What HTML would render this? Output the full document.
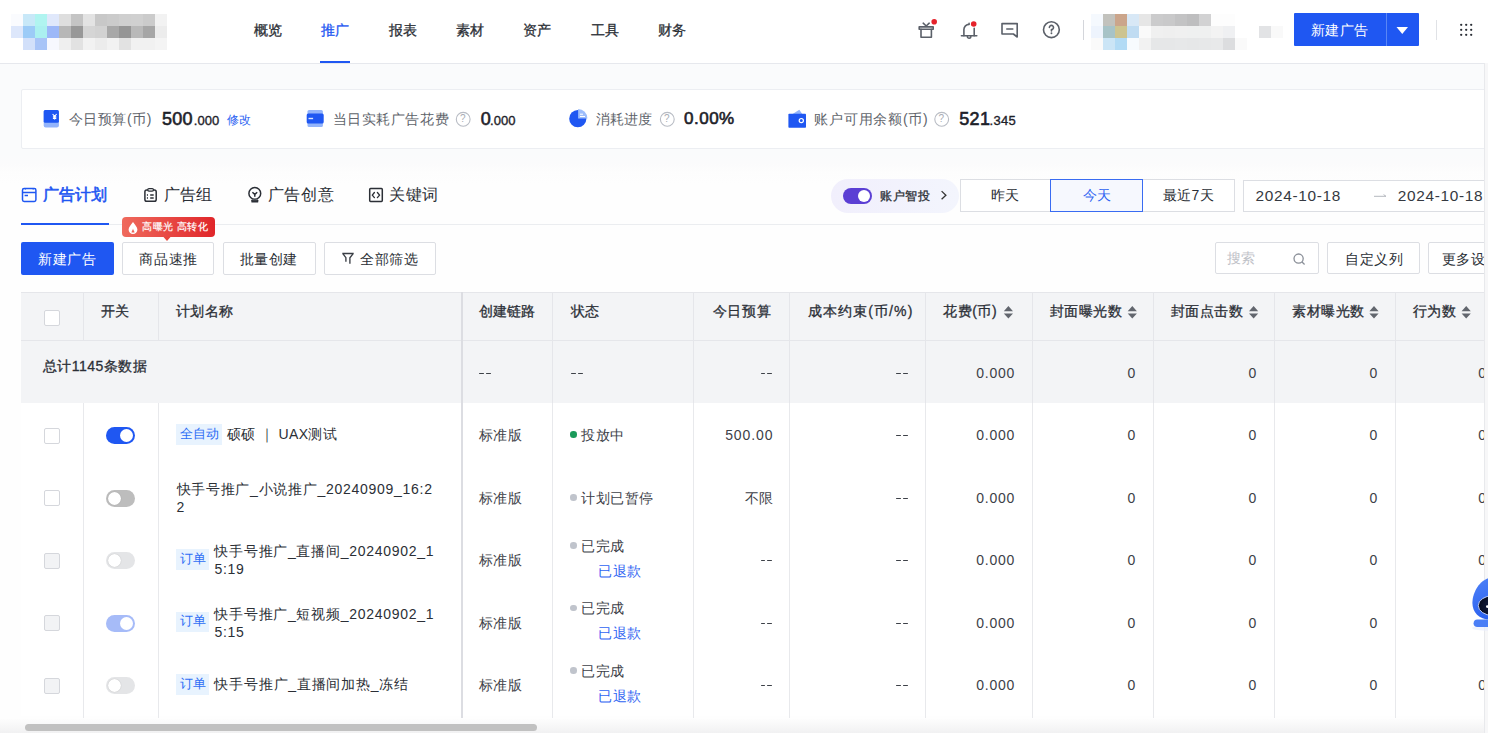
<!DOCTYPE html><html><head><meta charset="utf-8"><style>
html,body{margin:0;padding:0;width:1488px;height:733px;overflow:hidden;background:#fcfcfd;font-family:"Liberation Sans",sans-serif;}
.a{position:absolute;box-sizing:border-box;}
.t{position:absolute;white-space:nowrap;}
svg{position:absolute;overflow:visible;}
</style></head><body>

<div class="a" style="left:0px;top:0px;width:1488px;height:63px;background:#fff;"></div>
<div class="a" style="left:0px;top:63px;width:1488px;height:1px;background:#e6e8ed;"></div>
<div class="a" style="left:11px;top:14px;width:12px;height:12px;background:#fafbfe;"></div>
<div class="a" style="left:23px;top:14px;width:12px;height:12px;background:#c8e8f8;"></div>
<div class="a" style="left:35px;top:14px;width:12px;height:12px;background:#b0f4f0;"></div>
<div class="a" style="left:47px;top:14px;width:12px;height:12px;background:#e0e8fb;"></div>
<div class="a" style="left:59px;top:14px;width:12px;height:12px;background:#dedede;"></div>
<div class="a" style="left:71px;top:14px;width:12px;height:12px;background:#c4c4c4;"></div>
<div class="a" style="left:83px;top:14px;width:12px;height:12px;background:#e3e3e3;"></div>
<div class="a" style="left:95px;top:14px;width:12px;height:12px;background:#c8c8c8;"></div>
<div class="a" style="left:107px;top:14px;width:12px;height:12px;background:#cbcbcb;"></div>
<div class="a" style="left:119px;top:14px;width:12px;height:12px;background:#cfcfcf;"></div>
<div class="a" style="left:131px;top:14px;width:12px;height:12px;background:#d0d0d0;"></div>
<div class="a" style="left:143px;top:14px;width:12px;height:12px;background:#cbcbcb;"></div>
<div class="a" style="left:155px;top:14px;width:12px;height:12px;background:#f2f2f2;"></div>
<div class="a" style="left:11px;top:26px;width:12px;height:12px;background:#dde7fb;"></div>
<div class="a" style="left:23px;top:26px;width:12px;height:12px;background:#9ccbf7;"></div>
<div class="a" style="left:35px;top:26px;width:12px;height:12px;background:#abf0f0;"></div>
<div class="a" style="left:47px;top:26px;width:12px;height:12px;background:#9db8f8;"></div>
<div class="a" style="left:59px;top:26px;width:12px;height:12px;background:#b7b7b7;"></div>
<div class="a" style="left:71px;top:26px;width:12px;height:12px;background:#989898;"></div>
<div class="a" style="left:83px;top:26px;width:12px;height:12px;background:#d5d5d5;"></div>
<div class="a" style="left:95px;top:26px;width:12px;height:12px;background:#d2d2d2;"></div>
<div class="a" style="left:107px;top:26px;width:12px;height:12px;background:#a8a8a8;"></div>
<div class="a" style="left:119px;top:26px;width:12px;height:12px;background:#959595;"></div>
<div class="a" style="left:131px;top:26px;width:12px;height:12px;background:#b9b9b9;"></div>
<div class="a" style="left:143px;top:26px;width:12px;height:12px;background:#a6a6a6;"></div>
<div class="a" style="left:155px;top:26px;width:12px;height:12px;background:#ececec;"></div>
<div class="a" style="left:11px;top:38px;width:12px;height:12px;background:#ffffff;"></div>
<div class="a" style="left:23px;top:38px;width:12px;height:12px;background:#d2e0fa;"></div>
<div class="a" style="left:35px;top:38px;width:12px;height:12px;background:#a8c4f7;"></div>
<div class="a" style="left:47px;top:38px;width:12px;height:12px;background:#f7f8fe;"></div>
<div class="a" style="left:59px;top:38px;width:12px;height:12px;background:#efefef;"></div>
<div class="a" style="left:71px;top:38px;width:12px;height:12px;background:#e2e2e2;"></div>
<div class="a" style="left:83px;top:38px;width:12px;height:12px;background:#f2f2f2;"></div>
<div class="a" style="left:95px;top:38px;width:12px;height:12px;background:#ececec;"></div>
<div class="a" style="left:107px;top:38px;width:12px;height:12px;background:#f2f2f2;"></div>
<div class="a" style="left:119px;top:38px;width:12px;height:12px;background:#e2e2e2;"></div>
<div class="a" style="left:131px;top:38px;width:12px;height:12px;background:#f1f1f1;"></div>
<div class="a" style="left:143px;top:38px;width:12px;height:12px;background:#f1f1f1;"></div>
<div class="a" style="left:155px;top:38px;width:12px;height:12px;background:#f4f4f4;"></div>
<div class="t " style="left:253.5px;top:19.80px;font-size:14px;line-height:20px;color:#2b2f36;font-weight:400;letter-spacing:0px;-webkit-text-stroke:0.3px #2b2f36;">概览</div>
<div class="t " style="left:320.5px;top:19.80px;font-size:14px;line-height:20px;color:#1f57f2;font-weight:400;letter-spacing:0px;-webkit-text-stroke:0.3px #1f57f2;">推广</div>
<div class="t " style="left:388.5px;top:19.80px;font-size:14px;line-height:20px;color:#2b2f36;font-weight:400;letter-spacing:0px;-webkit-text-stroke:0.3px #2b2f36;">报表</div>
<div class="t " style="left:455.5px;top:19.80px;font-size:14px;line-height:20px;color:#2b2f36;font-weight:400;letter-spacing:0px;-webkit-text-stroke:0.3px #2b2f36;">素材</div>
<div class="t " style="left:522.5px;top:19.80px;font-size:14px;line-height:20px;color:#2b2f36;font-weight:400;letter-spacing:0px;-webkit-text-stroke:0.3px #2b2f36;">资产</div>
<div class="t " style="left:590.5px;top:19.80px;font-size:14px;line-height:20px;color:#2b2f36;font-weight:400;letter-spacing:0px;-webkit-text-stroke:0.3px #2b2f36;">工具</div>
<div class="t " style="left:657.5px;top:19.80px;font-size:14px;line-height:20px;color:#2b2f36;font-weight:400;letter-spacing:0px;-webkit-text-stroke:0.3px #2b2f36;">财务</div>
<div class="a" style="left:320px;top:61px;width:30px;height:2px;background:#1f57f2;"></div>
<svg style="left:0;top:0" width="1488" height="63">
<g fill="none" stroke="#5b6069" stroke-width="1.6" stroke-linejoin="round" stroke-linecap="round">
 <rect x="919.2" y="26.9" width="14" height="2.4"/>
 <path d="M921 29.4 V37.3 H931.4 V29.4"/>
 <path d="M923.2 23.2 L926.2 26 L929.2 23.2"/>
 <path d="M963.9 35.8 V29.6 A5.2 5.2 0 0 1 969.1 24.4 V23.4 M974.2 28.2 V35.8"/>
 <path d="M961.4 35.8 H976.8"/>
 <path d="M967.4 36.6 A1.7 1.7 0 0 0 970.8 36.6"/>
 <path d="M1002 23.6 H1017.2 V37 L1013.4 34 H1002 Z"/>
 <path d="M1006.8 29 H1012.8"/>
 <circle cx="1051.4" cy="29.7" r="7.9"/>
 <path d="M1049.4 27.4 A2.05 2.05 0 1 1 1051.45 29.45 V31"/>
</g>
<circle cx="1051.45" cy="33.3" r="0.95" fill="#5b6069"/>
<circle cx="934.2" cy="21.8" r="2.8" fill="#e5222b"/>
<circle cx="973.7" cy="24" r="2.8" fill="#e5222b"/>
</svg>
<div class="a" style="left:1083px;top:20px;width:1px;height:20px;background:#d4d6db;"></div>
<div class="a" style="left:1091px;top:14px;width:12px;height:12px;background:#f5f9fe;"></div>
<div class="a" style="left:1103px;top:14px;width:12px;height:12px;background:#c2c2bd;"></div>
<div class="a" style="left:1115px;top:14px;width:12px;height:12px;background:#cba58b;"></div>
<div class="a" style="left:1127px;top:14px;width:12px;height:12px;background:#d8e8f6;"></div>
<div class="a" style="left:1139px;top:14px;width:12px;height:12px;background:#e6e6e6;"></div>
<div class="a" style="left:1151px;top:14px;width:12px;height:12px;background:#cbcbcc;"></div>
<div class="a" style="left:1163px;top:14px;width:12px;height:12px;background:#c9c9ca;"></div>
<div class="a" style="left:1175px;top:14px;width:12px;height:12px;background:#c3c3c4;"></div>
<div class="a" style="left:1187px;top:14px;width:12px;height:12px;background:#bebebf;"></div>
<div class="a" style="left:1199px;top:14px;width:12px;height:12px;background:#d2d2d3;"></div>
<div class="a" style="left:1211px;top:14px;width:12px;height:12px;background:#fdfdfd;"></div>
<div class="a" style="left:1223px;top:14px;width:12px;height:12px;background:#fdfdfd;"></div>
<div class="a" style="left:1091px;top:26px;width:12px;height:12px;background:#eef4fd;"></div>
<div class="a" style="left:1103px;top:26px;width:12px;height:12px;background:#a7c3c7;"></div>
<div class="a" style="left:1115px;top:26px;width:12px;height:12px;background:#cdc490;"></div>
<div class="a" style="left:1127px;top:26px;width:12px;height:12px;background:#c0dcf2;"></div>
<div class="a" style="left:1139px;top:26px;width:12px;height:12px;background:#fafafa;"></div>
<div class="a" style="left:1151px;top:26px;width:12px;height:12px;background:#f0f0f0;"></div>
<div class="a" style="left:1163px;top:26px;width:12px;height:12px;background:#efefef;"></div>
<div class="a" style="left:1175px;top:26px;width:12px;height:12px;background:#f0f0f0;"></div>
<div class="a" style="left:1187px;top:26px;width:12px;height:12px;background:#eff0f0;"></div>
<div class="a" style="left:1199px;top:26px;width:12px;height:12px;background:#eff0f0;"></div>
<div class="a" style="left:1211px;top:26px;width:12px;height:12px;background:#f3f3f3;"></div>
<div class="a" style="left:1223px;top:26px;width:12px;height:12px;background:#eff0f2;"></div>
<div class="a" style="left:1091px;top:38px;width:12px;height:12px;background:#fafafa;"></div>
<div class="a" style="left:1103px;top:38px;width:12px;height:12px;background:#cbe5f6;"></div>
<div class="a" style="left:1115px;top:38px;width:12px;height:12px;background:#b2dbf5;"></div>
<div class="a" style="left:1127px;top:38px;width:12px;height:12px;background:#f7fbfe;"></div>
<div class="a" style="left:1139px;top:38px;width:12px;height:12px;background:#f2f2f2;"></div>
<div class="a" style="left:1151px;top:38px;width:12px;height:12px;background:#e6e7e8;"></div>
<div class="a" style="left:1163px;top:38px;width:12px;height:12px;background:#e6e7e8;"></div>
<div class="a" style="left:1175px;top:38px;width:12px;height:12px;background:#e7e8e9;"></div>
<div class="a" style="left:1187px;top:38px;width:12px;height:12px;background:#e6e7e8;"></div>
<div class="a" style="left:1199px;top:38px;width:12px;height:12px;background:#e7e8e9;"></div>
<div class="a" style="left:1211px;top:38px;width:12px;height:12px;background:#e8e9ea;"></div>
<div class="a" style="left:1223px;top:38px;width:12px;height:12px;background:#dcdddf;"></div>
<div class="a" style="left:1235px;top:38px;width:12px;height:12px;background:#fafafa;"></div>
<div class="a" style="left:1259px;top:26px;width:12px;height:12px;background:#e2e3e5;"></div>
<div class="a" style="left:1271px;top:26px;width:12px;height:12px;background:#f9f9f9;"></div>
<div class="a" style="left:1294px;top:13px;width:125px;height:33px;background:#1f57f2;border-radius:1px;"></div>
<div class="a" style="left:1386px;top:13px;width:1px;height:33px;background:#5a86f5;"></div>
<div class="t " style="left:1310.6px;top:20.00px;font-size:14px;line-height:20px;color:#fff;font-weight:400;letter-spacing:0.6px;">新建广告</div>
<svg style="left:0;top:0" width="1488" height="63"><path d="M1396.5 27 H1408 L1402.25 34 Z" fill="#fff"/></svg>
<div class="a" style="left:1436px;top:20px;width:1px;height:20px;background:#e0e2e6;"></div>
<svg style="left:0;top:0" width="1488" height="63"><circle cx="1461.2" cy="24.8" r="1.15" fill="#2b2f36"/><circle cx="1461.2" cy="29.8" r="1.15" fill="#2b2f36"/><circle cx="1461.2" cy="34.8" r="1.15" fill="#2b2f36"/><circle cx="1466.2" cy="24.8" r="1.15" fill="#2b2f36"/><circle cx="1466.2" cy="29.8" r="1.15" fill="#2b2f36"/><circle cx="1466.2" cy="34.8" r="1.15" fill="#2b2f36"/><circle cx="1471.2" cy="24.8" r="1.15" fill="#2b2f36"/><circle cx="1471.2" cy="29.8" r="1.15" fill="#2b2f36"/><circle cx="1471.2" cy="34.8" r="1.15" fill="#2b2f36"/></svg>
<div class="a" style="left:0px;top:64px;width:1484px;height:669px;background:linear-gradient(180deg,#fafbfc 0px,#fafbfc 90px,#fbfbfc 100px,#fdfdfd 108px,#fefefe 120px);"></div>
<div class="a" style="left:21px;top:89px;width:1470px;height:60px;background:#fff;border:1px solid #eceef2;border-radius:2px;"></div>
<svg style="left:0;top:0" width="1488" height="160">
 <rect x="43.7" y="110" width="15.2" height="17.5" rx="2" fill="#93b4fb"/>
 <rect x="43.7" y="110" width="15.2" height="12.8" rx="1.5" fill="#1f57f2"/>
 <path d="M52.6 114 L54.6 116.3 L56.6 114 M54.6 116.3 V119.6 M52.9 116.9 H56.3 M52.9 118.4 H56.3" stroke="#fff" stroke-width="1.1" fill="none"/>
 <rect x="307.5" y="110" width="15.4" height="17" rx="1.5" fill="#93b4fb"/>
 <rect x="306.7" y="113.5" width="17" height="10" rx="1.5" fill="#1f57f2"/>
 <rect x="308.5" y="117.8" width="4.6" height="1.4" fill="#fff" opacity="0.85"/>
 <circle cx="577.8" cy="118.7" r="8.6" fill="#1f57f2"/>
 <path d="M578.1 118.4 V109.1 A9.3 9.3 0 0 1 587.4 118.4 Z" fill="#9dbdfb"/>
 <path d="M580 114.2 H583 M580 116.5 H585" stroke="#fff" stroke-width="1"/>
 <path d="M792.6 114 L799.3 109.7 L802.3 114 Z" fill="#93b4fb"/>
 <rect x="788.4" y="113.8" width="17.6" height="14" rx="0.8" fill="#1f57f2"/>
 <circle cx="801.3" cy="120.6" r="2.1" fill="none" stroke="#fff" stroke-width="1.2"/>
 <g fill="none" stroke="#b8bcc4" stroke-width="1.1">
  <circle cx="463.2" cy="119.3" r="6.9"/><circle cx="667.3" cy="119.3" r="6.9"/><circle cx="941.7" cy="119.3" r="6.9"/>
 </g>
</svg>
<div class="t " style="left:460.0px;top:109.10px;font-size:10px;line-height:20px;color:#a8acb4;font-weight:400;letter-spacing:0px;">?</div>
<div class="t " style="left:664.0999999999999px;top:109.10px;font-size:10px;line-height:20px;color:#a8acb4;font-weight:400;letter-spacing:0px;">?</div>
<div class="t " style="left:938.5px;top:109.10px;font-size:10px;line-height:20px;color:#a8acb4;font-weight:400;letter-spacing:0px;">?</div>
<div class="t " style="left:68.5px;top:109.20px;font-size:14px;line-height:20px;color:#60646b;font-weight:400;letter-spacing:0.6px;">今日预算(币)</div>
<div class="t " style="left:162px;top:108.60px;font-size:18px;line-height:20px;color:#1d2129;font-weight:400;letter-spacing:0.3px;-webkit-text-stroke:0.6px #1d2129;">500</div>
<div class="t " style="left:193.8px;top:110.90px;font-size:13px;line-height:20px;color:#1d2129;font-weight:400;letter-spacing:0.05px;-webkit-text-stroke:0.35px #1d2129;">.000</div>
<div class="t " style="left:227.2px;top:109.80px;font-size:12.4px;line-height:20px;color:#2b62f2;font-weight:400;letter-spacing:0px;">修改</div>
<div class="t " style="left:332.5px;top:109.20px;font-size:14px;line-height:20px;color:#60646b;font-weight:400;letter-spacing:0.6px;">当日实耗广告花费</div>
<div class="t " style="left:480.8px;top:108.60px;font-size:18px;line-height:20px;color:#1d2129;font-weight:400;letter-spacing:0px;-webkit-text-stroke:0.6px #1d2129;">0</div>
<div class="t " style="left:490px;top:110.90px;font-size:13px;line-height:20px;color:#1d2129;font-weight:400;letter-spacing:0.05px;-webkit-text-stroke:0.35px #1d2129;">.000</div>
<div class="t " style="left:595.5px;top:109.20px;font-size:14px;line-height:20px;color:#60646b;font-weight:400;letter-spacing:0.3px;">消耗进度</div>
<div class="t " style="left:684px;top:109.30px;font-size:17px;line-height:20px;color:#1d2129;font-weight:400;letter-spacing:0.5px;-webkit-text-stroke:0.6px #1d2129;">0.00%</div>
<div class="t " style="left:814.4px;top:109.20px;font-size:14px;line-height:20px;color:#60646b;font-weight:400;letter-spacing:0.75px;">账户可用余额(币)</div>
<div class="t " style="left:959.3px;top:108.60px;font-size:18px;line-height:20px;color:#1d2129;font-weight:400;letter-spacing:0.3px;-webkit-text-stroke:0.6px #1d2129;">521</div>
<div class="t " style="left:989.5px;top:110.90px;font-size:13px;line-height:20px;color:#1d2129;font-weight:400;letter-spacing:0.3px;-webkit-text-stroke:0.35px #1d2129;">.345</div>
<div class="a" style="left:21px;top:224px;width:1463px;height:1px;background:#ebedf0;"></div>
<div class="a" style="left:21px;top:223px;width:88px;height:2px;background:#1f57f2;"></div>
<svg style="left:0;top:160" width="1488" height="100"><g transform="translate(0,-160)" fill="none" stroke-width="1.5">
 <rect x="22.5" y="188.6" width="13.4" height="12.8" rx="1.6" stroke="#1f57f2"/>
 <path d="M22.5 192.6 H35.9 M24.6 195.6 H28" stroke="#1f57f2"/>
 <path d="M25.4 187.9 V189.6 M33.2 187.9 V189.6" stroke="#1f57f2" stroke-width="1.3"/>
 <rect x="144.9" y="189.9" width="11.3" height="11.4" rx="1.8" stroke="#2b2f36"/>
 <rect x="147.7" y="188.5" width="5.8" height="2.6" rx="1.3" stroke="#2b2f36" stroke-width="1.25" fill="#fff"/>
 <path d="M146.9 195 H148 M150.2 195 H153.7 M146.9 198 H148 M150.2 198 H153.7" stroke="#2b2f36" stroke-width="1.3"/>
 <circle cx="254.8" cy="193.4" r="5.9" stroke="#2b2f36"/>
 <rect x="251.3" y="199.4" width="7" height="3.2" rx="0.9" fill="#2b2f36" stroke="none"/>
 <path d="M252.5 199.9 H257.1" stroke="#fff" stroke-width="0.7" opacity="0.35"/>
 <path d="M252.4 192.3 L254.8 194.4 L257.2 192.3 M254.8 194.4 V196.7" stroke="#2b2f36" stroke-width="1.5"/>
 <rect x="369.7" y="188.6" width="12.6" height="12.9" rx="0.9" stroke="#2b2f36"/>
 <path d="M374.4 192.5 L372.3 195.1 L374.4 197.6 M377.4 192.5 L379.6 195.1 L377.4 197.6" stroke="#2b2f36" stroke-width="1.35" stroke-linecap="round" stroke-linejoin="round"/>
</g></svg>
<div class="t " style="left:42.5px;top:184.70px;font-size:16px;line-height:20px;color:#1f57f2;font-weight:400;letter-spacing:0.3px;-webkit-text-stroke:0.6px #1f57f2;">广告计划</div>
<div class="t " style="left:163.5px;top:185.30px;font-size:16px;line-height:20px;color:#2b2f36;font-weight:400;letter-spacing:0.2px;">广告组</div>
<div class="t " style="left:267.5px;top:185.30px;font-size:16px;line-height:20px;color:#2b2f36;font-weight:400;letter-spacing:0.75px;">广告创意</div>
<div class="t " style="left:389.2px;top:185.30px;font-size:16px;line-height:20px;color:#2b2f36;font-weight:400;letter-spacing:0.5px;">关键词</div>
<div class="a" style="left:122.4px;top:217px;width:92.4px;height:20.3px;border-radius:4px;background:linear-gradient(90deg,#ef6a5d,#e0262a);"></div>
<svg style="left:0;top:0" width="300" height="260"><path d="M163.5 237 L167 241 L170.5 237 Z" fill="#e8473f"/>
<path d="M133 222 C131 225 128.6 227 128.6 229.6 A4.4 4.4 0 0 0 137.4 229.6 C137.4 227 135 225 133 222 Z M131.5 232.5 C131.5 231 133 230 133 228.5 C133 230 134.5 231 134.5 232.5 Z" fill="#fff" fill-rule="evenodd"/></svg>
<div class="t " style="left:142.3px;top:216.90px;font-size:10px;line-height:20px;color:#fff;font-weight:400;letter-spacing:0.45px;-webkit-text-stroke:0.2px #fff;">高曝光 高转化</div>
<div class="a" style="left:830.5px;top:179.4px;width:128.5px;height:33.3px;border-radius:17px;background:linear-gradient(90deg,#f1effc,#f3f5fd);"></div>
<div class="a" style="left:843px;top:188px;width:29px;height:15.5px;border-radius:8px;background:#5b3fd4;"></div>
<div class="a" style="left:857.5px;top:189.6px;width:12.4px;height:12.4px;border-radius:50%;background:#fff;"></div>
<svg style="left:0;top:0" width="1000" height="260"><path d="M941.6 191.1 L945.9 195.2 L941.6 199.3" fill="none" stroke="#333" stroke-width="1.3"/></svg>
<div class="t " style="left:880px;top:185.90px;font-size:12px;line-height:20px;color:#2b2f36;font-weight:400;letter-spacing:0.6px;-webkit-text-stroke:0.3px #2b2f36;">账户智投</div>
<div class="a" style="left:960px;top:179.4px;width:91px;height:32.4px;background:#fff;border:1px solid #dcdee3;border-right:none;"></div>
<div class="a" style="left:1050.3px;top:179.2px;width:92.7px;height:32.5px;background:#f6f8fe;border:1px solid #3a6cf2;"></div>
<div class="a" style="left:1143px;top:179.4px;width:92px;height:32.4px;background:#fff;border:1px solid #dcdee3;border-left:none;"></div>
<div class="t " style="left:991px;top:185.10px;font-size:14px;line-height:20px;color:#2b2f36;font-weight:400;letter-spacing:0px;">昨天</div>
<div class="t " style="left:1082.6px;top:185.10px;font-size:14px;line-height:20px;color:#2f64f2;font-weight:400;letter-spacing:0px;">今天</div>
<div class="t " style="left:1162.5px;top:185.10px;font-size:14px;line-height:20px;color:#2b2f36;font-weight:400;letter-spacing:0.5px;">最近7天</div>
<div class="a" style="left:1243.4px;top:179.5px;width:260px;height:32px;background:#fff;border:1px solid #dcdee3;"></div>
<div class="t " style="left:1255.5px;top:185.70px;font-size:15.4px;line-height:20px;color:#353941;font-weight:400;letter-spacing:0.68px;">2024-10-18</div>
<div class="t " style="left:1397.8px;top:185.70px;font-size:15.4px;line-height:20px;color:#353941;font-weight:400;letter-spacing:0.68px;">2024-10-18</div>
<svg style="left:0;top:0" width="1488" height="260"><path d="M1374 196.3 H1386 L1383.6 194.6" fill="none" stroke="#b5b8bf" stroke-width="1"/></svg>
<div class="a" style="left:21px;top:242px;width:93px;height:33px;background:#1f57f2;border-radius:2px;"></div>
<div class="t " style="left:38px;top:248.90px;font-size:14px;line-height:20px;color:#fff;font-weight:400;letter-spacing:0.6px;">新建广告</div>
<div class="a" style="left:122.4px;top:242px;width:91.8px;height:32.8px;background:#fff;border:1px solid #dcdee3;border-radius:2px;"></div>
<div class="t " style="left:139.4px;top:248.90px;font-size:14px;line-height:20px;color:#2b2f36;font-weight:400;letter-spacing:0.6px;">商品速推</div>
<div class="a" style="left:223px;top:242px;width:93px;height:32.8px;background:#fff;border:1px solid #dcdee3;border-radius:2px;"></div>
<div class="t " style="left:239.7px;top:248.90px;font-size:14px;line-height:20px;color:#2b2f36;font-weight:400;letter-spacing:0.6px;">批量创建</div>
<div class="a" style="left:324.4px;top:242px;width:111.5px;height:32.8px;background:#fff;border:1px solid #dcdee3;border-radius:2px;"></div>
<div class="t " style="left:360.3px;top:248.90px;font-size:14px;line-height:20px;color:#2b2f36;font-weight:400;letter-spacing:0.6px;">全部筛选</div>
<svg style="left:0;top:0" width="1488" height="290"><path d="M342.3 253.5 H353.7 M343 253.9 L345.9 257.7 V261.7 M353 253.9 L349.9 257.8 V263.7" fill="none" stroke="#3a3e45" stroke-width="1.35"/></svg>
<div class="a" style="left:1214.5px;top:242px;width:104px;height:32.4px;background:#fff;border:1px solid #dcdee3;border-radius:2px;"></div>
<div class="t " style="left:1227px;top:248.30px;font-size:14px;line-height:20px;color:#bfc2c8;font-weight:400;letter-spacing:0px;">搜索</div>
<svg style="left:0;top:0" width="1488" height="290"><circle cx="1298.6" cy="258.6" r="4.6" fill="none" stroke="#8a8f98" stroke-width="1.3"/><path d="M1302 262 L1304.6 264.4" stroke="#8a8f98" stroke-width="1.3"/></svg>
<div class="a" style="left:1327px;top:242px;width:93px;height:32.4px;background:#fff;border:1px solid #dcdee3;border-radius:2px;"></div>
<div class="t " style="left:1345px;top:248.90px;font-size:14px;line-height:20px;color:#2b2f36;font-weight:400;letter-spacing:0.6px;">自定义列</div>
<div class="a" style="left:1428.4px;top:242px;width:100px;height:32.4px;background:#fff;border:1px solid #dcdee3;border-radius:2px;"></div>
<div class="t " style="left:1441.5px;top:248.90px;font-size:14px;line-height:20px;color:#2b2f36;font-weight:400;letter-spacing:0.6px;">更多设置</div>
<div class="a" style="left:21px;top:402.5px;width:1463px;height:313.5px;background:#fff;"></div>
<div class="a" style="left:21px;top:292px;width:1463px;height:110.5px;background:#f3f4f6;"></div>
<div class="a" style="left:21px;top:292px;width:1463px;height:1px;background:#e5e6ea;"></div>
<div class="a" style="left:21px;top:340px;width:1463px;height:1px;background:#e5e6ea;"></div>
<div class="a" style="left:83.2px;top:292px;width:1px;height:48px;background:#e5e6ea;"></div>
<div class="a" style="left:83.2px;top:402.5px;width:1px;height:315.5px;background:#e8e9ec;"></div>
<div class="a" style="left:157.9px;top:292px;width:1px;height:48px;background:#e5e6ea;"></div>
<div class="a" style="left:157.9px;top:402.5px;width:1px;height:315.5px;background:#e8e9ec;"></div>
<div class="a" style="left:461.4px;top:292px;width:1.6px;height:426px;background:#dcdde2;"></div>
<div class="a" style="left:552.0px;top:292px;width:1px;height:110.5px;background:#e5e6ea;"></div>
<div class="a" style="left:552.0px;top:402.5px;width:1px;height:315.5px;background:#e8e9ec;"></div>
<div class="a" style="left:693.1px;top:292px;width:1px;height:110.5px;background:#e5e6ea;"></div>
<div class="a" style="left:693.1px;top:402.5px;width:1px;height:315.5px;background:#e8e9ec;"></div>
<div class="a" style="left:789.2px;top:292px;width:1px;height:110.5px;background:#e5e6ea;"></div>
<div class="a" style="left:789.2px;top:402.5px;width:1px;height:315.5px;background:#e8e9ec;"></div>
<div class="a" style="left:924.8px;top:292px;width:1px;height:110.5px;background:#e5e6ea;"></div>
<div class="a" style="left:924.8px;top:402.5px;width:1px;height:315.5px;background:#e8e9ec;"></div>
<div class="a" style="left:1032.3px;top:292px;width:1px;height:110.5px;background:#e5e6ea;"></div>
<div class="a" style="left:1032.3px;top:402.5px;width:1px;height:315.5px;background:#e8e9ec;"></div>
<div class="a" style="left:1152.8px;top:292px;width:1px;height:110.5px;background:#e5e6ea;"></div>
<div class="a" style="left:1152.8px;top:402.5px;width:1px;height:315.5px;background:#e8e9ec;"></div>
<div class="a" style="left:1273.9px;top:292px;width:1px;height:110.5px;background:#e5e6ea;"></div>
<div class="a" style="left:1273.9px;top:402.5px;width:1px;height:315.5px;background:#e8e9ec;"></div>
<div class="a" style="left:1394.9px;top:292px;width:1px;height:110.5px;background:#e5e6ea;"></div>
<div class="a" style="left:1394.9px;top:402.5px;width:1px;height:315.5px;background:#e8e9ec;"></div>
<div class="a" style="left:43.5px;top:310.4px;width:16.2px;height:16px;background:#fff;border:1px solid #d5d7dc;border-radius:2px;"></div>
<div class="t " style="left:101px;top:301.00px;font-size:14px;line-height:20px;color:#2b2f36;font-weight:400;letter-spacing:0px;-webkit-text-stroke:0.3px #2b2f36;">开关</div>
<div class="t " style="left:176.3px;top:301.00px;font-size:14px;line-height:20px;color:#2b2f36;font-weight:400;letter-spacing:0.2px;-webkit-text-stroke:0.3px #2b2f36;">计划名称</div>
<div class="t " style="left:478.7px;top:301.00px;font-size:14px;line-height:20px;color:#2b2f36;font-weight:400;letter-spacing:0.2px;-webkit-text-stroke:0.3px #2b2f36;">创建链路</div>
<div class="t " style="left:570.7px;top:301.00px;font-size:14px;line-height:20px;color:#2b2f36;font-weight:400;letter-spacing:0px;-webkit-text-stroke:0.3px #2b2f36;">状态</div>
<div class="t " style="right:716.8px;top:301.00px;font-size:14px;line-height:20px;color:#2b2f36;font-weight:400;letter-spacing:0.6px;-webkit-text-stroke:0.3px #2b2f36;">今日预算</div>
<div class="t " style="right:574.6px;top:301.00px;font-size:14px;line-height:20px;color:#2b2f36;font-weight:400;letter-spacing:1.1px;-webkit-text-stroke:0.3px #2b2f36;">成本约束(币/%)</div>
<div class="t " style="left:943.3px;top:301.00px;font-size:14px;line-height:20px;color:#2b2f36;font-weight:400;letter-spacing:0.5px;-webkit-text-stroke:0.3px #2b2f36;">花费(币)</div>
<div class="t " style="left:1049.8px;top:301.00px;font-size:14px;line-height:20px;color:#2b2f36;font-weight:400;letter-spacing:0.5px;-webkit-text-stroke:0.3px #2b2f36;">封面曝光数</div>
<div class="t " style="left:1170.8px;top:301.00px;font-size:14px;line-height:20px;color:#2b2f36;font-weight:400;letter-spacing:0.5px;-webkit-text-stroke:0.3px #2b2f36;">封面点击数</div>
<div class="t " style="left:1292.3px;top:301.00px;font-size:14px;line-height:20px;color:#2b2f36;font-weight:400;letter-spacing:0.5px;-webkit-text-stroke:0.3px #2b2f36;">素材曝光数</div>
<div class="t " style="left:1412.8px;top:301.00px;font-size:14px;line-height:20px;color:#2b2f36;font-weight:400;letter-spacing:0.5px;-webkit-text-stroke:0.3px #2b2f36;">行为数</div>
<svg style="left:0;top:0" width="1488" height="400"><path d="M1003.8 311.3 L1008.4 306.1 L1013.0 311.3 Z M1003.8 313.5 L1008.4 318.5 L1013.0 313.5 Z" fill="#62666e"/><path d="M1127.7 311.3 L1132.3 306.1 L1136.9 311.3 Z M1127.7 313.5 L1132.3 318.5 L1136.9 313.5 Z" fill="#62666e"/><path d="M1249 311.3 L1253.6 306.1 L1258.2 311.3 Z M1249 313.5 L1253.6 318.5 L1258.2 313.5 Z" fill="#62666e"/><path d="M1369.4 311.3 L1374.0 306.1 L1378.6000000000001 311.3 Z M1369.4 313.5 L1374.0 318.5 L1378.6000000000001 313.5 Z" fill="#62666e"/><path d="M1461.6 311.3 L1466.1999999999998 306.1 L1470.8 311.3 Z M1461.6 313.5 L1466.1999999999998 318.5 L1470.8 313.5 Z" fill="#62666e"/></svg>
<div class="t " style="left:42.8px;top:355.50px;font-size:14px;line-height:20px;color:#2b2f36;font-weight:400;letter-spacing:0.5px;-webkit-text-stroke:0.3px #2b2f36;">总计1145条数据</div>
<div class="a" style="left:478.90px;top:372.95px;width:4.9px;height:1.3px;background:#3d4148;border-radius:0.6px;"></div><div class="a" style="left:485.80px;top:372.95px;width:4.9px;height:1.3px;background:#3d4148;border-radius:0.6px;"></div>
<div class="a" style="left:570.90px;top:372.95px;width:4.9px;height:1.3px;background:#3d4148;border-radius:0.6px;"></div><div class="a" style="left:577.80px;top:372.95px;width:4.9px;height:1.3px;background:#3d4148;border-radius:0.6px;"></div>
<div class="a" style="left:760.50px;top:372.95px;width:4.9px;height:1.3px;background:#3d4148;border-radius:0.6px;"></div><div class="a" style="left:767.40px;top:372.95px;width:4.9px;height:1.3px;background:#3d4148;border-radius:0.6px;"></div>
<div class="a" style="left:896.10px;top:372.95px;width:4.9px;height:1.3px;background:#3d4148;border-radius:0.6px;"></div><div class="a" style="left:903.00px;top:372.95px;width:4.9px;height:1.3px;background:#3d4148;border-radius:0.6px;"></div>
<div class="t " style="right:472.95000000000005px;top:362.80px;font-size:14px;line-height:20px;color:#3d4148;font-weight:400;letter-spacing:0.75px;">0.000</div>
<div class="t " style="right:352.70000000000005px;top:362.80px;font-size:14px;line-height:20px;color:#3d4148;font-weight:400;letter-spacing:0px;">0</div>
<div class="t " style="right:231.5999999999999px;top:362.80px;font-size:14px;line-height:20px;color:#3d4148;font-weight:400;letter-spacing:0px;">0</div>
<div class="t " style="right:110.59999999999991px;top:362.80px;font-size:14px;line-height:20px;color:#3d4148;font-weight:400;letter-spacing:0px;">0</div>
<div class="t " style="right:2px;top:362.80px;font-size:14px;line-height:20px;color:#3d4148;font-weight:400;letter-spacing:0px;">0</div>
<div class="a" style="left:43.6px;top:427.75px;width:16.2px;height:16.2px;background:#fff;border:1px solid #d5d7dc;border-radius:2px;"></div>
<div class="a" style="left:106px;top:427.35px;width:29.3px;height:17px;background:#1f57f2;border-radius:9px;"></div>
<div class="a" style="left:120.30000000000001px;top:429.35px;width:13px;height:13px;background:#fff;border-radius:50%;"></div>
<div class="a" style="left:175.7px;top:424.15px;width:46.8px;height:20.7px;background:#e8f3fe;"></div>
<div class="t " style="left:179.7px;top:423.95px;font-size:12.5px;line-height:20px;color:#2e6ef5;font-weight:400;letter-spacing:0px;">全自动</div>
<div class="t " style="left:227px;top:423.75px;font-size:14px;line-height:20px;color:#2b2f36;font-weight:400;letter-spacing:0.35px;">硕硕 ｜ UAX测试</div>
<div class="t " style="left:479px;top:425.25px;font-size:14px;line-height:20px;color:#3d4148;font-weight:400;letter-spacing:0.4px;">标准版</div>
<div class="a" style="left:570.1px;top:431.45px;width:6.6px;height:6.6px;border-radius:50%;background:#1a9a5a;"></div>
<div class="t " style="left:581px;top:425.25px;font-size:14px;line-height:20px;color:#3d4148;font-weight:400;letter-spacing:0.6px;">投放中</div>
<div class="t " style="right:714.6px;top:425.05px;font-size:14px;line-height:20px;color:#3d4148;font-weight:400;letter-spacing:0.9px;">500.00</div>
<div class="a" style="left:896.10px;top:435.20px;width:4.9px;height:1.3px;background:#3d4148;border-radius:0.6px;"></div><div class="a" style="left:903.00px;top:435.20px;width:4.9px;height:1.3px;background:#3d4148;border-radius:0.6px;"></div>
<div class="t " style="right:472.95000000000005px;top:425.05px;font-size:14px;line-height:20px;color:#3d4148;font-weight:400;letter-spacing:0.75px;">0.000</div>
<div class="t " style="right:352.70000000000005px;top:425.05px;font-size:14px;line-height:20px;color:#3d4148;font-weight:400;letter-spacing:0px;">0</div>
<div class="t " style="right:231.5999999999999px;top:425.05px;font-size:14px;line-height:20px;color:#3d4148;font-weight:400;letter-spacing:0px;">0</div>
<div class="t " style="right:110.59999999999991px;top:425.05px;font-size:14px;line-height:20px;color:#3d4148;font-weight:400;letter-spacing:0px;">0</div>
<div class="t " style="right:2px;top:425.05px;font-size:14px;line-height:20px;color:#3d4148;font-weight:400;letter-spacing:0px;">0</div>
<div class="a" style="left:43.6px;top:490.25px;width:16.2px;height:16.2px;background:#fff;border:1px solid #d5d7dc;border-radius:2px;"></div>
<div class="a" style="left:106px;top:489.85px;width:29.3px;height:17px;background:#bdbdbd;border-radius:9px;"></div>
<div class="a" style="left:108px;top:491.85px;width:13px;height:13px;background:#fff;border-radius:50%;box-shadow:0 0 1px rgba(0,0,0,0.25);"></div>
<div class="t" style="left:176.5px;top:479.75px;font-size:14px;line-height:18.2px;color:#2b2f36;letter-spacing:0.72px;">快手号推广_小说推广_20240909_16:2<br>2</div>
<div class="t " style="left:479px;top:487.75px;font-size:14px;line-height:20px;color:#3d4148;font-weight:400;letter-spacing:0.4px;">标准版</div>
<div class="a" style="left:570.1px;top:493.95px;width:6.6px;height:6.6px;border-radius:50%;background:#c0c4cc;"></div>
<div class="t " style="left:581px;top:487.75px;font-size:14px;line-height:20px;color:#3d4148;font-weight:400;letter-spacing:0.6px;">计划已暂停</div>
<div class="t " style="right:715.5px;top:487.55px;font-size:14px;line-height:20px;color:#3d4148;font-weight:400;letter-spacing:0px;">不限</div>
<div class="a" style="left:896.10px;top:497.70px;width:4.9px;height:1.3px;background:#3d4148;border-radius:0.6px;"></div><div class="a" style="left:903.00px;top:497.70px;width:4.9px;height:1.3px;background:#3d4148;border-radius:0.6px;"></div>
<div class="t " style="right:472.95000000000005px;top:487.55px;font-size:14px;line-height:20px;color:#3d4148;font-weight:400;letter-spacing:0.75px;">0.000</div>
<div class="t " style="right:352.70000000000005px;top:487.55px;font-size:14px;line-height:20px;color:#3d4148;font-weight:400;letter-spacing:0px;">0</div>
<div class="t " style="right:231.5999999999999px;top:487.55px;font-size:14px;line-height:20px;color:#3d4148;font-weight:400;letter-spacing:0px;">0</div>
<div class="t " style="right:110.59999999999991px;top:487.55px;font-size:14px;line-height:20px;color:#3d4148;font-weight:400;letter-spacing:0px;">0</div>
<div class="t " style="right:2px;top:487.55px;font-size:14px;line-height:20px;color:#3d4148;font-weight:400;letter-spacing:0px;">0</div>
<div class="a" style="left:43.6px;top:552.75px;width:16.2px;height:16.2px;background:#f2f3f5;border:1px solid #d5d7dc;border-radius:2px;"></div>
<div class="a" style="left:106px;top:552.35px;width:29.3px;height:17px;background:#e4e5e7;border-radius:9px;"></div>
<div class="a" style="left:108px;top:554.35px;width:13px;height:13px;background:#fff;border-radius:50%;box-shadow:0 0 1px rgba(0,0,0,0.25);"></div>
<div class="a" style="left:176px;top:549.1500000000001px;width:33.3px;height:20.7px;background:#e8f3fe;"></div>
<div class="t " style="left:180px;top:548.95px;font-size:12.5px;line-height:20px;color:#2e6ef5;font-weight:400;letter-spacing:0px;">订单</div>
<div class="t" style="left:214.4px;top:542.25px;font-size:14px;line-height:18.2px;color:#2b2f36;letter-spacing:0.72px;">快手号推广_直播间_20240902_1<br>5:19</div>
<div class="t " style="left:479px;top:550.25px;font-size:14px;line-height:20px;color:#3d4148;font-weight:400;letter-spacing:0.4px;">标准版</div>
<div class="a" style="left:570.1px;top:542.25px;width:6.6px;height:6.6px;border-radius:50%;background:#c0c4cc;"></div>
<div class="t " style="left:581px;top:535.95px;font-size:14px;line-height:20px;color:#3d4148;font-weight:400;letter-spacing:0.5px;">已完成</div>
<div class="t " style="left:598.4px;top:560.85px;font-size:14px;line-height:20px;color:#2f64f2;font-weight:400;letter-spacing:0.3px;">已退款</div>
<div class="a" style="left:760.50px;top:560.20px;width:4.9px;height:1.3px;background:#3d4148;border-radius:0.6px;"></div><div class="a" style="left:767.40px;top:560.20px;width:4.9px;height:1.3px;background:#3d4148;border-radius:0.6px;"></div>
<div class="a" style="left:896.10px;top:560.20px;width:4.9px;height:1.3px;background:#3d4148;border-radius:0.6px;"></div><div class="a" style="left:903.00px;top:560.20px;width:4.9px;height:1.3px;background:#3d4148;border-radius:0.6px;"></div>
<div class="t " style="right:472.95000000000005px;top:550.05px;font-size:14px;line-height:20px;color:#3d4148;font-weight:400;letter-spacing:0.75px;">0.000</div>
<div class="t " style="right:352.70000000000005px;top:550.05px;font-size:14px;line-height:20px;color:#3d4148;font-weight:400;letter-spacing:0px;">0</div>
<div class="t " style="right:231.5999999999999px;top:550.05px;font-size:14px;line-height:20px;color:#3d4148;font-weight:400;letter-spacing:0px;">0</div>
<div class="t " style="right:110.59999999999991px;top:550.05px;font-size:14px;line-height:20px;color:#3d4148;font-weight:400;letter-spacing:0px;">0</div>
<div class="t " style="right:2px;top:550.05px;font-size:14px;line-height:20px;color:#3d4148;font-weight:400;letter-spacing:0px;">0</div>
<div class="a" style="left:43.6px;top:615.25px;width:16.2px;height:16.2px;background:#f2f3f5;border:1px solid #d5d7dc;border-radius:2px;"></div>
<div class="a" style="left:106px;top:614.85px;width:29.3px;height:17px;background:#a6bbf8;border-radius:9px;"></div>
<div class="a" style="left:120.30000000000001px;top:616.85px;width:13px;height:13px;background:#fff;border-radius:50%;"></div>
<div class="a" style="left:176px;top:611.6500000000001px;width:33.3px;height:20.7px;background:#e8f3fe;"></div>
<div class="t " style="left:180px;top:611.45px;font-size:12.5px;line-height:20px;color:#2e6ef5;font-weight:400;letter-spacing:0px;">订单</div>
<div class="t" style="left:214.4px;top:604.75px;font-size:14px;line-height:18.2px;color:#2b2f36;letter-spacing:0.72px;">快手号推广_短视频_20240902_1<br>5:15</div>
<div class="t " style="left:479px;top:612.75px;font-size:14px;line-height:20px;color:#3d4148;font-weight:400;letter-spacing:0.4px;">标准版</div>
<div class="a" style="left:570.1px;top:604.75px;width:6.6px;height:6.6px;border-radius:50%;background:#c0c4cc;"></div>
<div class="t " style="left:581px;top:598.45px;font-size:14px;line-height:20px;color:#3d4148;font-weight:400;letter-spacing:0.5px;">已完成</div>
<div class="t " style="left:598.4px;top:623.35px;font-size:14px;line-height:20px;color:#2f64f2;font-weight:400;letter-spacing:0.3px;">已退款</div>
<div class="a" style="left:760.50px;top:622.70px;width:4.9px;height:1.3px;background:#3d4148;border-radius:0.6px;"></div><div class="a" style="left:767.40px;top:622.70px;width:4.9px;height:1.3px;background:#3d4148;border-radius:0.6px;"></div>
<div class="a" style="left:896.10px;top:622.70px;width:4.9px;height:1.3px;background:#3d4148;border-radius:0.6px;"></div><div class="a" style="left:903.00px;top:622.70px;width:4.9px;height:1.3px;background:#3d4148;border-radius:0.6px;"></div>
<div class="t " style="right:472.95000000000005px;top:612.55px;font-size:14px;line-height:20px;color:#3d4148;font-weight:400;letter-spacing:0.75px;">0.000</div>
<div class="t " style="right:352.70000000000005px;top:612.55px;font-size:14px;line-height:20px;color:#3d4148;font-weight:400;letter-spacing:0px;">0</div>
<div class="t " style="right:231.5999999999999px;top:612.55px;font-size:14px;line-height:20px;color:#3d4148;font-weight:400;letter-spacing:0px;">0</div>
<div class="t " style="right:110.59999999999991px;top:612.55px;font-size:14px;line-height:20px;color:#3d4148;font-weight:400;letter-spacing:0px;">0</div>
<div class="a" style="left:43.6px;top:677.75px;width:16.2px;height:16.2px;background:#f2f3f5;border:1px solid #d5d7dc;border-radius:2px;"></div>
<div class="a" style="left:106px;top:677.35px;width:29.3px;height:17px;background:#e4e5e7;border-radius:9px;"></div>
<div class="a" style="left:108px;top:679.35px;width:13px;height:13px;background:#fff;border-radius:50%;box-shadow:0 0 1px rgba(0,0,0,0.25);"></div>
<div class="a" style="left:176px;top:674.1500000000001px;width:33.3px;height:20.7px;background:#e8f3fe;"></div>
<div class="t " style="left:180px;top:673.95px;font-size:12.5px;line-height:20px;color:#2e6ef5;font-weight:400;letter-spacing:0px;">订单</div>
<div class="t " style="left:214.4px;top:674.25px;font-size:14px;line-height:20px;color:#2b2f36;font-weight:400;letter-spacing:0.78px;">快手号推广_直播间加热_冻结</div>
<div class="t " style="left:479px;top:675.25px;font-size:14px;line-height:20px;color:#3d4148;font-weight:400;letter-spacing:0.4px;">标准版</div>
<div class="a" style="left:570.1px;top:667.25px;width:6.6px;height:6.6px;border-radius:50%;background:#c0c4cc;"></div>
<div class="t " style="left:581px;top:660.95px;font-size:14px;line-height:20px;color:#3d4148;font-weight:400;letter-spacing:0.5px;">已完成</div>
<div class="t " style="left:598.4px;top:685.85px;font-size:14px;line-height:20px;color:#2f64f2;font-weight:400;letter-spacing:0.3px;">已退款</div>
<div class="a" style="left:760.50px;top:685.20px;width:4.9px;height:1.3px;background:#3d4148;border-radius:0.6px;"></div><div class="a" style="left:767.40px;top:685.20px;width:4.9px;height:1.3px;background:#3d4148;border-radius:0.6px;"></div>
<div class="a" style="left:896.10px;top:685.20px;width:4.9px;height:1.3px;background:#3d4148;border-radius:0.6px;"></div><div class="a" style="left:903.00px;top:685.20px;width:4.9px;height:1.3px;background:#3d4148;border-radius:0.6px;"></div>
<div class="t " style="right:472.95000000000005px;top:675.05px;font-size:14px;line-height:20px;color:#3d4148;font-weight:400;letter-spacing:0.75px;">0.000</div>
<div class="t " style="right:352.70000000000005px;top:675.05px;font-size:14px;line-height:20px;color:#3d4148;font-weight:400;letter-spacing:0px;">0</div>
<div class="t " style="right:231.5999999999999px;top:675.05px;font-size:14px;line-height:20px;color:#3d4148;font-weight:400;letter-spacing:0px;">0</div>
<div class="t " style="right:110.59999999999991px;top:675.05px;font-size:14px;line-height:20px;color:#3d4148;font-weight:400;letter-spacing:0px;">0</div>
<div class="t " style="right:2px;top:675.05px;font-size:14px;line-height:20px;color:#3d4148;font-weight:400;letter-spacing:0px;">0</div>
<div class="a" style="left:0px;top:718.5px;width:1484px;height:14.5px;background:linear-gradient(180deg,#fdfdfd,#f1f1f2);"></div>
<div class="a" style="left:25px;top:723.5px;width:511.5px;height:7.5px;background:#c1c1c1;border-radius:4px;"></div>
<div class="a" style="left:1484px;top:63px;width:1px;height:670px;background:#e8e9ec;"></div>
<div class="a" style="left:1485px;top:63px;width:3px;height:670px;background:#f7f7f8;"></div>
<svg style="left:0;top:0" width="1488" height="733">
<defs><linearGradient id="rb" x1="0" y1="0" x2="0.3" y2="1"><stop offset="0" stop-color="#4f82f7"/><stop offset="0.6" stop-color="#3a6ff3"/><stop offset="1" stop-color="#2c62ef"/></linearGradient>
<radialGradient id="rf" cx="0.75" cy="0.55" r="0.75"><stop offset="0" stop-color="#24386e"/><stop offset="0.6" stop-color="#0e1736"/><stop offset="1" stop-color="#050a1c"/></radialGradient></defs>
<ellipse cx="1492" cy="628" rx="20" ry="3" fill="#e9eefc" opacity="0.7"/>
<rect x="1473.6" y="619.4" width="24" height="7.6" rx="3.8" fill="#4a7ef6"/>
<path d="M1490 577.8 C1480 580 1472.4 592 1472.4 603 C1472.4 612 1479 619.5 1490 619.5 L1500 619.5 L1500 577.8 Z" fill="url(#rb)"/>
<ellipse cx="1492.5" cy="605.6" rx="14.2" ry="9.8" fill="url(#rf)" stroke="#c9d8ff" stroke-width="0.9"/>
<circle cx="1487.3" cy="606.6" r="1.3" fill="#fff"/>
</svg>
</body></html>
